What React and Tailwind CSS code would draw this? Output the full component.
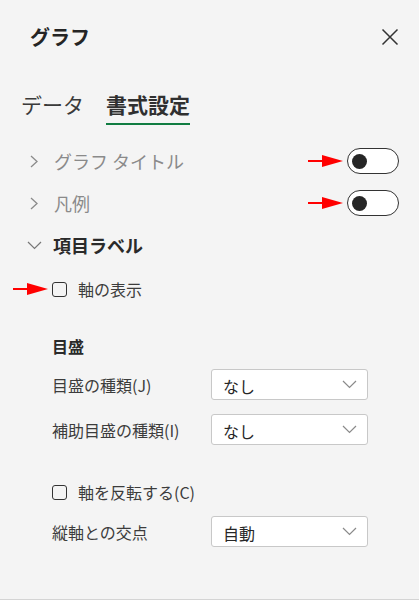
const jp = { fontFamily: '"Noto Sans CJK JP", "Noto Sans", sans-serif' };

function ChevronRight() {
  return (
    <svg width="10" height="13" viewBox="0 0 10 13" fill="none" className="shrink-0">
      <polyline points="2,1 8,6.5 2,12" stroke="#8a8a8a" strokeWidth="1.3" />
    </svg>
  );
}

function ChevronDown({ color = "#777", w = 15 }) {
  return (
    <svg width={w} height="9" viewBox="0 0 15 9" fill="none" className="shrink-0">
      <polyline points="1,1 7.5,7.5 14,1" stroke={color} strokeWidth="1.2" />
    </svg>
  );
}

function RedArrow() {
  return (
    <svg width="35" height="14" viewBox="0 0 35 14" className="shrink-0">
      <line x1="0" y1="7" x2="16" y2="7" stroke="#ff0000" strokeWidth="2" />
      <polygon points="14,1 35,7 14,13" fill="#ff0000" />
    </svg>
  );
}

function Toggle() {
  return (
    <div className="flex h-[26px] w-[52px] items-center rounded-full border-[1.5px] border-[#333] bg-white">
      <div className="ml-[4px] h-[15px] w-[15px] rounded-full bg-[#262626]" />
    </div>
  );
}

function Checkbox() {
  return (
    <div className="h-[15px] w-[15px] shrink-0 rounded-[3px] border-[1.5px] border-[#333] bg-[#f4f4f4]" />
  );
}

function Select({ value }) {
  return (
    <div className="flex h-[31px] w-[157px] items-center justify-between rounded-[3px] border border-[#c8c8c8] bg-white pl-[11px] pr-[10px]">
      <span className="pt-[3px] text-[16px] text-[#262626]">{value}</span>
      <ChevronDown color="#8a8a8a" />
    </div>
  );
}

function SelectRow({ label, value }) {
  return (
    <div className="flex items-center pl-[52px]">
      <span className="w-[159px] text-[16px] text-[#3c3c3c]">{label}</span>
      <Select value={value} />
    </div>
  );
}

export default function App() {
  return (
    <div style={jp} className="flex h-[600px] w-full flex-col border-b border-[#d4d4d4] bg-[#f4f4f4]">
      <header className="flex h-[74px] items-center justify-between pl-[30px] pr-[20px]">
        <h1 className="text-[20px] font-bold text-[#252525]">グラフ</h1>
        <button type="button" aria-label="閉じる" className="flex h-[18px] w-[18px] items-center justify-center">
          <svg width="18" height="18" viewBox="0 0 18 18" fill="none">
            <path d="M1.5 1.5 L16.5 16.5 M16.5 1.5 L1.5 16.5" stroke="#333" strokeWidth="1.5" />
          </svg>
        </button>
      </header>

      <div className="mt-[16px] flex items-end pl-[21px]">
        <div className="w-[85px] pb-[7px] text-[21px] leading-[28px] text-[#3a3a3a]">データ</div>
        <div className="border-b-[2px] border-[#107c41] pb-[5px] text-[21px] font-bold leading-[28px] text-[#303030]">
          書式設定
        </div>
      </div>

      <div className="mt-[15px] flex h-[42px] items-center pr-[20px]">
        <div className="flex flex-1 items-center gap-[15px] pl-[29px]">
          <ChevronRight />
          <span className="text-[18px] text-[#8a8a8a]">グラフ タイトル</span>
        </div>
        <div className="flex items-center gap-[4px]">
          <RedArrow />
          <Toggle />
        </div>
      </div>

      <div className="flex h-[42px] items-center pr-[20px]">
        <div className="flex flex-1 items-center gap-[15px] pl-[29px]">
          <ChevronRight />
          <span className="text-[18px] text-[#8a8a8a]">凡例</span>
        </div>
        <div className="flex items-center gap-[4px]">
          <RedArrow />
          <Toggle />
        </div>
      </div>

      <div className="flex h-[42px] items-center gap-[11px] pl-[27px]">
        <ChevronDown color="#777" />
        <span className="text-[18px] font-bold text-[#2a2a2a]">項目ラベル</span>
      </div>

      <div className="flex h-[46px] items-center pl-[13px]">
        <RedArrow />
        <div className="ml-[4px]">
          <Checkbox />
        </div>
        <span className="ml-[11px] text-[16px] text-[#3c3c3c]">軸の表示</span>
      </div>

      <div className="mt-[22px] flex h-[24px] items-center pl-[52px]">
        <span className="text-[16px] font-bold text-[#2a2a2a]">目盛</span>
      </div>

      <div className="mt-[11px] flex flex-col gap-[14px]">
        <SelectRow label="目盛の種類(J)" value="なし" />
        <SelectRow label="補助目盛の種類(I)" value="なし" />
      </div>

      <div className="mt-[35px] flex h-[24px] items-center pl-[52px]">
        <Checkbox />
        <span className="ml-[11px] text-[16px] text-[#3c3c3c]">軸を反転する(C)</span>
      </div>

      <div className="mt-[12px]">
        <SelectRow label="縦軸との交点" value="自動" />
      </div>
    </div>
  );
}
